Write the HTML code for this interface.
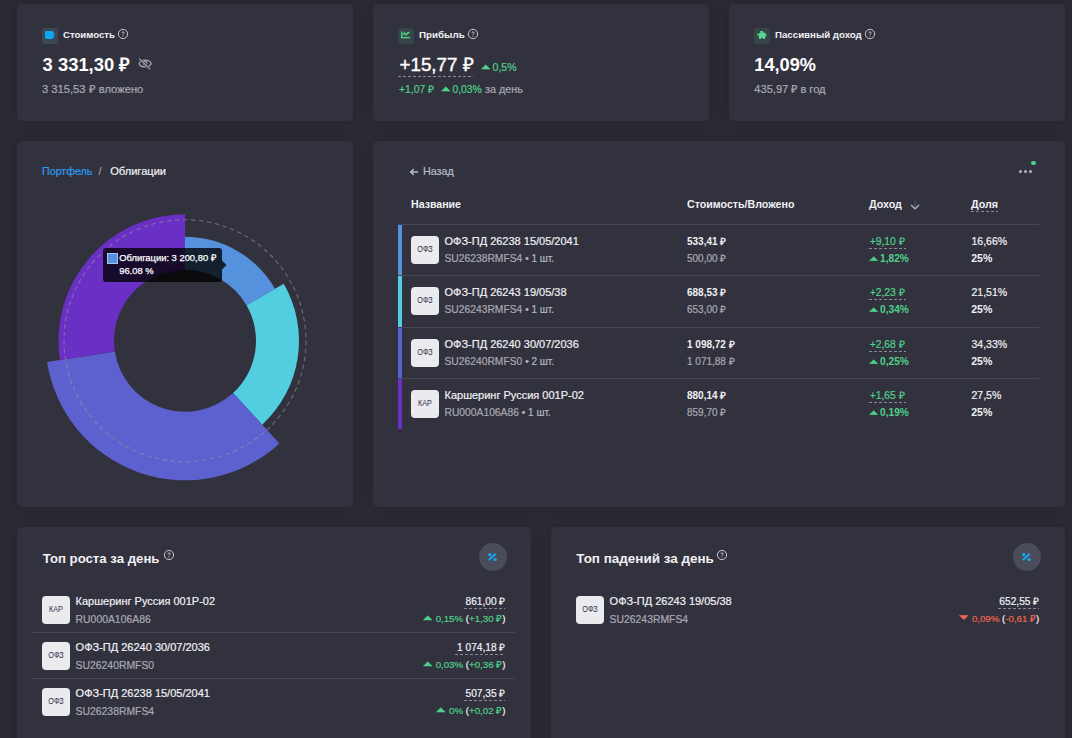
<!DOCTYPE html>
<html><head><meta charset="utf-8"><style>
html,body{margin:0;padding:0}
body{width:1072px;height:738px;overflow:hidden;position:relative;background:#2c2b34;font-family:"Liberation Sans",sans-serif}
.t{position:absolute;white-space:nowrap}
</style></head><body>
<div style="position:absolute;left:17px;top:4px;width:336px;height:117px;background:#32323e;border-radius:5px;box-shadow:0 0 14px rgba(0,0,0,0.2);"></div><div style="position:absolute;left:373px;top:4px;width:336px;height:117px;background:#32323e;border-radius:5px;box-shadow:0 0 14px rgba(0,0,0,0.2);"></div><div style="position:absolute;left:729px;top:4px;width:336px;height:117px;background:#32323e;border-radius:5px;box-shadow:0 0 14px rgba(0,0,0,0.2);"></div><div style="position:absolute;left:17px;top:141px;width:336px;height:366px;background:#32323e;border-radius:5px;box-shadow:0 0 14px rgba(0,0,0,0.2);"></div><div style="position:absolute;left:373px;top:141px;width:692px;height:366px;background:#32323e;border-radius:5px;box-shadow:0 0 14px rgba(0,0,0,0.2);"></div><div style="position:absolute;left:17px;top:527px;width:514px;height:230px;background:#32323e;border-radius:5px;box-shadow:0 0 14px rgba(0,0,0,0.2);"></div><div style="position:absolute;left:551px;top:527px;width:514px;height:230px;background:#32323e;border-radius:5px;box-shadow:0 0 14px rgba(0,0,0,0.2);"></div><div style="position:absolute;left:42px;top:28px;width:16px;height:16px;background:#3c4756;border-radius:3px;"></div><svg style="position:absolute;left:42px;top:28px" width="16" height="16" viewBox="0 0 16 16"><rect x="3" y="3" width="8.2" height="8" rx="1.4" fill="#0aa8f3"/><rect x="9" y="4.6" width="3.1" height="4.8" rx="0.6" fill="#0aa8f3"/><circle cx="10.6" cy="7" r="0.6" fill="#1f6c98"/></svg><div class="t" style="left:63px;top:30.00px;font-size:9.6px;line-height:9.6px;color:#f0f0f4;font-weight:700;">Стоимость</div><svg style="position:absolute;left:116px;top:27px" width="14" height="14" viewBox="0 0 14 14"><circle cx="7" cy="7" r="4.65" fill="none" stroke="#c9c9d0" stroke-width="1"/><path d="M5.9 5.9 Q5.9 4.9 7 4.9 Q8.1 4.9 8.1 5.9 Q8.1 6.5 7.4 6.8 Q7 7 7 7.7" fill="none" stroke="#c9c9d0" stroke-width="0.9"/><circle cx="7" cy="9.1" r="0.55" fill="#c9c9d0"/></svg><div class="t" style="left:42.6px;top:56.00px;font-size:18.4px;line-height:18.4px;color:#ffffff;font-weight:700;">3 331,30 ₽</div><svg style="position:absolute;left:136px;top:56px" width="18" height="16" viewBox="0 0 18 16"><path d="M3.1 7.5 C4.5 2.9 13.5 2.9 15.3 7.5 C13.5 12.1 4.5 12.1 3.1 7.5 Z" fill="none" stroke="#a4a6b0" stroke-width="1.2"/><circle cx="9" cy="7.3" r="1.9" fill="none" stroke="#a4a6b0" stroke-width="1.1"/><path d="M3.4 3 L13.9 12.9" stroke="#32323e" stroke-width="2.4"/><path d="M3.4 2.9 L13.8 12.8" stroke="#a4a6b0" stroke-width="1.2" stroke-linecap="round"/></svg><div class="t" style="left:42px;top:84.00px;font-size:11.2px;line-height:11.2px;color:#a9a9b3;font-weight:400;-webkit-text-stroke-width:0.2px;">3 315,53 ₽ вложено</div><div style="position:absolute;left:398px;top:28px;width:16px;height:16px;background:#364548;border-radius:3px;"></div><svg style="position:absolute;left:398px;top:28px" width="16" height="16" viewBox="0 0 16 16"><path d="M3.8 3.6 V9.6 H12.2" fill="none" stroke="#4fd88a" stroke-width="1.4"/><path d="M5 6.6 L6.6 5 L8.1 7.2 L10.2 4.4 L11.2 4.4" fill="none" stroke="#4fd88a" stroke-width="1.4" stroke-linejoin="round"/><path d="M9.6 4 H11.3 V6.5 Z" fill="#4fd88a"/></svg><div class="t" style="left:419px;top:30.00px;font-size:9.8px;line-height:9.8px;color:#f0f0f4;font-weight:700;">Прибыль</div><svg style="position:absolute;left:465.6px;top:27px" width="14" height="14" viewBox="0 0 14 14"><circle cx="7" cy="7" r="4.65" fill="none" stroke="#c9c9d0" stroke-width="1"/><path d="M5.9 5.9 Q5.9 4.9 7 4.9 Q8.1 4.9 8.1 5.9 Q8.1 6.5 7.4 6.8 Q7 7 7 7.7" fill="none" stroke="#c9c9d0" stroke-width="0.9"/><circle cx="7" cy="9.1" r="0.55" fill="#c9c9d0"/></svg><div class="t" style="left:399.5px;top:56.00px;font-size:18.8px;line-height:18.8px;color:#ffffff;font-weight:400;-webkit-text-stroke-width:0.4px;">+15,77 ₽</div><svg style="position:absolute;left:398.0px;top:76px" width="75.5" height="1"><line x1="0" y1="0.5" x2="75.5" y2="0.5" stroke="#8a8a92" stroke-width="1" stroke-dasharray="3 2"/></svg><svg style="position:absolute;left:480.5px;top:64px" width="9.6" height="5.6" viewBox="0 0 9.6 5.6"><path d="M0.5 5.1 L4.8 0.8 L9.1 5.1 Z" fill="#4fd08a" stroke="#4fd08a" stroke-width="0.6" stroke-linejoin="round"/></svg><div class="t" style="left:492.5px;top:62.00px;font-size:10.6px;line-height:10.6px;color:#4fd08a;font-weight:400;-webkit-text-stroke-width:0.2px;">0,5%</div><div class="t" style="left:399px;top:85.00px;font-size:10.4px;line-height:10.4px;color:#4fd08a;font-weight:400;-webkit-text-stroke-width:0.2px;">+1,07 ₽</div><svg style="position:absolute;left:441px;top:86px" width="9.6" height="5.6" viewBox="0 0 9.6 5.6"><path d="M0.5 5.1 L4.8 0.8 L9.1 5.1 Z" fill="#4fd08a" stroke="#4fd08a" stroke-width="0.6" stroke-linejoin="round"/></svg><div class="t" style="left:452.4px;top:85.00px;font-size:10.4px;line-height:10.4px;color:#4fd08a;font-weight:400;-webkit-text-stroke-width:0.2px;">0,03%</div><div class="t" style="left:485px;top:84.00px;font-size:10.8px;line-height:10.8px;color:#a9a9b3;font-weight:400;-webkit-text-stroke-width:0.2px;">за день</div><div style="position:absolute;left:754px;top:28px;width:16px;height:16px;background:#364548;border-radius:3px;"></div><svg style="position:absolute;left:754px;top:28px" width="16" height="16" viewBox="0 0 16 16"><ellipse cx="8.3" cy="7.1" rx="3.8" ry="2.9" fill="#56d890"/><rect x="6" y="3" width="3.2" height="1.8" rx="0.8" fill="#56d890"/><rect x="4.9" y="8.5" width="2" height="2.5" rx="0.5" fill="#56d890"/><rect x="9.1" y="8.5" width="1.9" height="2.5" rx="0.5" fill="#56d890"/><ellipse cx="3.8" cy="6.4" rx="0.9" ry="0.9" fill="#56d890"/><rect x="11" y="6" width="1.2" height="2.6" rx="0.5" fill="#56d890"/></svg><div class="t" style="left:775px;top:30.00px;font-size:9.7px;line-height:9.7px;color:#f0f0f4;font-weight:700;">Пассивный доход</div><svg style="position:absolute;left:863.2px;top:27px" width="14" height="14" viewBox="0 0 14 14"><circle cx="7" cy="7" r="4.65" fill="none" stroke="#c9c9d0" stroke-width="1"/><path d="M5.9 5.9 Q5.9 4.9 7 4.9 Q8.1 4.9 8.1 5.9 Q8.1 6.5 7.4 6.8 Q7 7 7 7.7" fill="none" stroke="#c9c9d0" stroke-width="0.9"/><circle cx="7" cy="9.1" r="0.55" fill="#c9c9d0"/></svg><div class="t" style="left:754.3px;top:56.00px;font-size:18.2px;line-height:18.2px;color:#ffffff;font-weight:700;">14,09%</div><div class="t" style="left:754.3px;top:84.00px;font-size:11.1px;line-height:11.1px;color:#a9a9b3;font-weight:400;-webkit-text-stroke-width:0.2px;">435,97 ₽ в год</div><div class="t" style="left:42px;top:166.00px;font-size:10.7px;line-height:10.7px;color:#2a9df4;font-weight:400;-webkit-text-stroke-width:0.2px;">Портфель</div><div class="t" style="left:98.5px;top:166.00px;font-size:10.7px;line-height:10.7px;color:#9a9aa4;font-weight:400;-webkit-text-stroke-width:0.2px;">/</div><div class="t" style="left:110.2px;top:166.00px;font-size:11.1px;line-height:11.1px;color:#f0f0f4;font-weight:400;-webkit-text-stroke-width:0.2px;">Облигации</div><svg style="position:absolute;left:0;top:0" width="360" height="520" viewBox="0 0 360 520"><path d="M185.00 236.75 A104 104 0 0 1 275.07 288.75 L246.49 305.25 A71 71 0 0 0 185.00 269.75 Z" fill="#5591dc"/><path d="M283.73 283.75 A114 114 0 0 1 262.16 424.67 L233.06 393.01 A71 71 0 0 0 246.49 305.25 Z" fill="#53cde0"/><path d="M279.42 443.44 A139.5 139.5 0 0 1 47.14 362.09 L114.84 351.61 A71 71 0 0 0 233.06 393.01 Z" fill="#5d61cf"/><path d="M59.99 360.10 A126.5 126.5 0 0 1 185.00 214.25 L185.00 269.75 A71 71 0 0 0 114.84 351.61 Z" fill="#6a2fc4"/><circle cx="185" cy="340.75" r="121" fill="none" stroke="rgba(150,150,160,0.6)" stroke-width="1.1" stroke-dasharray="4.5 3.5"/></svg><div style="position:absolute;left:103px;top:248px;width:119px;height:34px;background:rgba(0,0,0,0.78);border-radius:3px"></div><svg style="position:absolute;left:222px;top:260px" width="5" height="10" viewBox="0 0 5 10"><path d="M0 0.5 L4.5 5 L0 9.5 Z" fill="rgba(0,0,0,0.78)"/></svg><div style="position:absolute;left:107px;top:253px;width:11px;height:11px;background:#5591dc;border-radius:0px;box-sizing:border-box;border:1px solid #a8c4ee;"></div><div class="t" style="left:119.2px;top:253.00px;font-size:9.4px;line-height:9.4px;color:#ffffff;font-weight:400;-webkit-text-stroke-width:0.25px;">Облигации: 3 200,80 ₽</div><div class="t" style="left:119.2px;top:266.00px;font-size:9.4px;line-height:9.4px;color:#ffffff;font-weight:400;-webkit-text-stroke-width:0.25px;">96.08 %</div><svg style="position:absolute;left:409px;top:167px" width="10" height="10" viewBox="0 0 10 10"><path d="M9 5 H2 M4.8 2 L1.6 5 L4.8 8" fill="none" stroke="#b6bccb" stroke-width="1.4"/></svg><div class="t" style="left:422.9px;top:166.00px;font-size:10.8px;line-height:10.8px;color:#b6bccb;font-weight:400;-webkit-text-stroke-width:0.2px;">Назад</div><div class="t" style="left:411px;top:199.00px;font-size:10.6px;line-height:10.6px;color:#f0f0f4;font-weight:700;">Название</div><div class="t" style="left:687px;top:199.00px;font-size:10.65px;line-height:10.65px;color:#f0f0f4;font-weight:700;">Стоимость/Вложено</div><div class="t" style="left:869px;top:199.00px;font-size:10.7px;line-height:10.7px;color:#f0f0f4;font-weight:700;">Доход</div><svg style="position:absolute;left:910px;top:199px" width="10" height="12" viewBox="0 0 10 12"><path d="M5 1 V7" fill="none" stroke="#4e4e5a" stroke-width="1.2"/><path d="M1.3 6.3 L5 9.8 L8.7 6.3" fill="none" stroke="#b4b8c4" stroke-width="1.25" stroke-linecap="round" stroke-linejoin="round"/></svg><div class="t" style="left:971px;top:199.00px;font-size:10.7px;line-height:10.7px;color:#f0f0f4;font-weight:700;">Доля</div><svg style="position:absolute;left:971.0px;top:211px" width="27.0" height="1"><line x1="0" y1="0.5" x2="27.0" y2="0.5" stroke="#8a8a92" stroke-width="1" stroke-dasharray="3 2"/></svg><div style="position:absolute;left:1018.9px;top:169.8px;width:3.2px;height:3.2px;background:#b4b4bc;border-radius:1.6px;"></div><div style="position:absolute;left:1023.6999999999999px;top:169.8px;width:3.2px;height:3.2px;background:#b4b4bc;border-radius:1.6px;"></div><div style="position:absolute;left:1028.6000000000001px;top:169.8px;width:3.2px;height:3.2px;background:#b4b4bc;border-radius:1.6px;"></div><div style="position:absolute;left:1031px;top:160.6px;width:4.6px;height:4.6px;background:#4fd08a;border-radius:2.3px;"></div><div style="position:absolute;left:398px;top:224px;width:641px;height:1px;background:#474754;border-radius:0px;"></div><div style="position:absolute;left:398px;top:225px;width:4px;height:50px;background:#5591dc;border-radius:0px;"></div><div style="position:absolute;left:398px;top:275px;width:641px;height:1px;background:#474754;border-radius:0px;"></div><div style="position:absolute;left:411px;top:236px;width:28px;height:28px;background:#e9ebef;border-radius:4px;"></div><div class="t" style="left:425px;top:245.00px;font-size:8.6px;line-height:8.6px;color:#3a3650;font-weight:400;-webkit-text-stroke-width:0.05px;transform:translateX(-50%) scaleX(0.84);">ОФЗ</div><div class="t" style="left:444.5px;top:236.00px;font-size:11px;line-height:11px;color:#f0f0f4;font-weight:400;-webkit-text-stroke-width:0.2px;">ОФЗ-ПД 26238 15/05/2041</div><div class="t" style="left:444.5px;top:254.00px;font-size:10.3px;line-height:10.3px;color:#a9a9b3;font-weight:400;-webkit-text-stroke-width:0.2px;">SU26238RMFS4 <span style="font-size:10px;color:#b8b8c0">• 1 шт.</span></div><div class="t" style="left:687px;top:237.00px;font-size:10px;line-height:10px;color:#f0f0f4;font-weight:700;">533,41 ₽</div><div class="t" style="left:687px;top:254.00px;font-size:10px;line-height:10px;color:#a9a9b3;font-weight:400;-webkit-text-stroke-width:0.2px;">500,00 ₽</div><div class="t" style="left:869.7px;top:237.00px;font-size:10.3px;line-height:10.3px;color:#4fd08a;font-weight:400;-webkit-text-stroke-width:0.2px;">+9,10 ₽</div><svg style="position:absolute;left:869.0px;top:248px" width="37.0" height="1"><line x1="0" y1="0.5" x2="37.0" y2="0.5" stroke="#8a8a92" stroke-width="1" stroke-dasharray="3 2"/></svg><svg style="position:absolute;left:869px;top:255.5px" width="9.4" height="5.3" viewBox="0 0 9.4 5.3"><path d="M0.5 4.8 L4.7 0.8 L8.9 4.8 Z" fill="#4fd08a" stroke="#4fd08a" stroke-width="0.6" stroke-linejoin="round"/></svg><div class="t" style="left:880px;top:254.00px;font-size:10.2px;line-height:10.2px;color:#4fd08a;font-weight:700;">1,82%</div><div class="t" style="left:971.5px;top:236.00px;font-size:10.5px;line-height:10.5px;color:#f0f0f4;font-weight:400;-webkit-text-stroke-width:0.2px;">16,66%</div><div class="t" style="left:971.2px;top:253.00px;font-size:10.6px;line-height:10.6px;color:#f0f0f4;font-weight:700;">25%</div><div style="position:absolute;left:398px;top:276px;width:4px;height:51px;background:#53cde0;border-radius:0px;"></div><div style="position:absolute;left:398px;top:327px;width:641px;height:1px;background:#474754;border-radius:0px;"></div><div style="position:absolute;left:411px;top:287px;width:28px;height:28px;background:#e9ebef;border-radius:4px;"></div><div class="t" style="left:425px;top:296.00px;font-size:8.6px;line-height:8.6px;color:#3a3650;font-weight:400;-webkit-text-stroke-width:0.05px;transform:translateX(-50%) scaleX(0.84);">ОФЗ</div><div class="t" style="left:444.5px;top:287.00px;font-size:11px;line-height:11px;color:#f0f0f4;font-weight:400;-webkit-text-stroke-width:0.2px;">ОФЗ-ПД 26243 19/05/38</div><div class="t" style="left:444.5px;top:305.00px;font-size:10.3px;line-height:10.3px;color:#a9a9b3;font-weight:400;-webkit-text-stroke-width:0.2px;">SU26243RMFS4 <span style="font-size:10px;color:#b8b8c0">• 1 шт.</span></div><div class="t" style="left:687px;top:288.00px;font-size:10px;line-height:10px;color:#f0f0f4;font-weight:700;">688,53 ₽</div><div class="t" style="left:687px;top:305.00px;font-size:10px;line-height:10px;color:#a9a9b3;font-weight:400;-webkit-text-stroke-width:0.2px;">653,00 ₽</div><div class="t" style="left:869.7px;top:288.00px;font-size:10.3px;line-height:10.3px;color:#4fd08a;font-weight:400;-webkit-text-stroke-width:0.2px;">+2,23 ₽</div><svg style="position:absolute;left:869.0px;top:299px" width="37.0" height="1"><line x1="0" y1="0.5" x2="37.0" y2="0.5" stroke="#8a8a92" stroke-width="1" stroke-dasharray="3 2"/></svg><svg style="position:absolute;left:869px;top:306.5px" width="9.4" height="5.3" viewBox="0 0 9.4 5.3"><path d="M0.5 4.8 L4.7 0.8 L8.9 4.8 Z" fill="#4fd08a" stroke="#4fd08a" stroke-width="0.6" stroke-linejoin="round"/></svg><div class="t" style="left:880px;top:305.00px;font-size:10.2px;line-height:10.2px;color:#4fd08a;font-weight:700;">0,34%</div><div class="t" style="left:971.5px;top:287.00px;font-size:10.5px;line-height:10.5px;color:#f0f0f4;font-weight:400;-webkit-text-stroke-width:0.2px;">21,51%</div><div class="t" style="left:971.2px;top:304.00px;font-size:10.6px;line-height:10.6px;color:#f0f0f4;font-weight:700;">25%</div><div style="position:absolute;left:398px;top:328px;width:4px;height:50px;background:#5d61cf;border-radius:0px;"></div><div style="position:absolute;left:398px;top:378px;width:641px;height:1px;background:#474754;border-radius:0px;"></div><div style="position:absolute;left:411px;top:339px;width:28px;height:28px;background:#e9ebef;border-radius:4px;"></div><div class="t" style="left:425px;top:348.00px;font-size:8.6px;line-height:8.6px;color:#3a3650;font-weight:400;-webkit-text-stroke-width:0.05px;transform:translateX(-50%) scaleX(0.84);">ОФЗ</div><div class="t" style="left:444.5px;top:339.00px;font-size:11px;line-height:11px;color:#f0f0f4;font-weight:400;-webkit-text-stroke-width:0.2px;">ОФЗ-ПД 26240 30/07/2036</div><div class="t" style="left:444.5px;top:357.00px;font-size:10.3px;line-height:10.3px;color:#a9a9b3;font-weight:400;-webkit-text-stroke-width:0.2px;">SU26240RMFS0 <span style="font-size:10px;color:#b8b8c0">• 2 шт.</span></div><div class="t" style="left:687px;top:340.00px;font-size:10px;line-height:10px;color:#f0f0f4;font-weight:700;">1 098,72 ₽</div><div class="t" style="left:687px;top:357.00px;font-size:10px;line-height:10px;color:#a9a9b3;font-weight:400;-webkit-text-stroke-width:0.2px;">1 071,88 ₽</div><div class="t" style="left:869.7px;top:340.00px;font-size:10.3px;line-height:10.3px;color:#4fd08a;font-weight:400;-webkit-text-stroke-width:0.2px;">+2,68 ₽</div><svg style="position:absolute;left:869.0px;top:351px" width="37.0" height="1"><line x1="0" y1="0.5" x2="37.0" y2="0.5" stroke="#8a8a92" stroke-width="1" stroke-dasharray="3 2"/></svg><svg style="position:absolute;left:869px;top:358.5px" width="9.4" height="5.3" viewBox="0 0 9.4 5.3"><path d="M0.5 4.8 L4.7 0.8 L8.9 4.8 Z" fill="#4fd08a" stroke="#4fd08a" stroke-width="0.6" stroke-linejoin="round"/></svg><div class="t" style="left:880px;top:357.00px;font-size:10.2px;line-height:10.2px;color:#4fd08a;font-weight:700;">0,25%</div><div class="t" style="left:971.5px;top:339.00px;font-size:10.5px;line-height:10.5px;color:#f0f0f4;font-weight:400;-webkit-text-stroke-width:0.2px;">34,33%</div><div class="t" style="left:971.2px;top:356.00px;font-size:10.6px;line-height:10.6px;color:#f0f0f4;font-weight:700;">25%</div><div style="position:absolute;left:398px;top:379px;width:4px;height:50px;background:#6a2fc4;border-radius:0px;"></div><div style="position:absolute;left:411px;top:390px;width:28px;height:28px;background:#e9ebef;border-radius:4px;"></div><div class="t" style="left:425px;top:399.00px;font-size:8.6px;line-height:8.6px;color:#3a3650;font-weight:400;-webkit-text-stroke-width:0.05px;transform:translateX(-50%) scaleX(0.84);">КАР</div><div class="t" style="left:444.5px;top:390.00px;font-size:11px;line-height:11px;color:#f0f0f4;font-weight:400;-webkit-text-stroke-width:0.2px;">Каршеринг Руссия 001P-02</div><div class="t" style="left:444.5px;top:408.00px;font-size:10.3px;line-height:10.3px;color:#a9a9b3;font-weight:400;-webkit-text-stroke-width:0.2px;">RU000A106A86 <span style="font-size:10px;color:#b8b8c0">• 1 шт.</span></div><div class="t" style="left:687px;top:391.00px;font-size:10px;line-height:10px;color:#f0f0f4;font-weight:700;">880,14 ₽</div><div class="t" style="left:687px;top:408.00px;font-size:10px;line-height:10px;color:#a9a9b3;font-weight:400;-webkit-text-stroke-width:0.2px;">859,70 ₽</div><div class="t" style="left:869.7px;top:391.00px;font-size:10.3px;line-height:10.3px;color:#4fd08a;font-weight:400;-webkit-text-stroke-width:0.2px;">+1,65 ₽</div><svg style="position:absolute;left:869.0px;top:402px" width="37.0" height="1"><line x1="0" y1="0.5" x2="37.0" y2="0.5" stroke="#8a8a92" stroke-width="1" stroke-dasharray="3 2"/></svg><svg style="position:absolute;left:869px;top:409.5px" width="9.4" height="5.3" viewBox="0 0 9.4 5.3"><path d="M0.5 4.8 L4.7 0.8 L8.9 4.8 Z" fill="#4fd08a" stroke="#4fd08a" stroke-width="0.6" stroke-linejoin="round"/></svg><div class="t" style="left:880px;top:408.00px;font-size:10.2px;line-height:10.2px;color:#4fd08a;font-weight:700;">0,19%</div><div class="t" style="left:971.5px;top:390.00px;font-size:10.5px;line-height:10.5px;color:#f0f0f4;font-weight:400;-webkit-text-stroke-width:0.2px;">27,5%</div><div class="t" style="left:971.2px;top:407.00px;font-size:10.6px;line-height:10.6px;color:#f0f0f4;font-weight:700;">25%</div><div class="t" style="left:42.7px;top:552.00px;font-size:13.2px;line-height:13.2px;color:#f0f0f4;font-weight:700;">Топ роста за день</div><svg style="position:absolute;left:161.5px;top:548px" width="14" height="14" viewBox="0 0 14 14"><circle cx="7" cy="7" r="4.6" fill="none" stroke="#c9c9d0" stroke-width="1"/><path d="M5.9 5.9 Q5.9 4.9 7 4.9 Q8.1 4.9 8.1 5.9 Q8.1 6.5 7.4 6.8 Q7 7 7 7.7" fill="none" stroke="#c9c9d0" stroke-width="0.9"/><circle cx="7" cy="9.1" r="0.55" fill="#c9c9d0"/></svg><div style="position:absolute;left:479px;top:543px;width:28px;height:28px;border-radius:14px;background:#4a4c5a"></div><svg style="position:absolute;left:479px;top:543px" width="28" height="28" viewBox="0 0 28 28"><path d="M10.4 16.5 L16.3 11.3" stroke="#14aaf8" stroke-width="1.9" stroke-linecap="round"/><circle cx="10.8" cy="11.7" r="1.6" fill="#14aaf8"/><circle cx="16.1" cy="16.5" r="1.6" fill="#14aaf8"/></svg><div class="t" style="left:576.3px;top:552.00px;font-size:13.45px;line-height:13.45px;color:#f0f0f4;font-weight:700;">Топ падений за день</div><svg style="position:absolute;left:715.3px;top:547.8px" width="14" height="14" viewBox="0 0 14 14"><circle cx="7" cy="7" r="4.6" fill="none" stroke="#c9c9d0" stroke-width="1"/><path d="M5.9 5.9 Q5.9 4.9 7 4.9 Q8.1 4.9 8.1 5.9 Q8.1 6.5 7.4 6.8 Q7 7 7 7.7" fill="none" stroke="#c9c9d0" stroke-width="0.9"/><circle cx="7" cy="9.1" r="0.55" fill="#c9c9d0"/></svg><div style="position:absolute;left:1013px;top:543px;width:28px;height:28px;border-radius:14px;background:#4a4c5a"></div><svg style="position:absolute;left:1013px;top:543px" width="28" height="28" viewBox="0 0 28 28"><path d="M10.4 16.5 L16.3 11.3" stroke="#14aaf8" stroke-width="1.9" stroke-linecap="round"/><circle cx="10.8" cy="11.7" r="1.6" fill="#14aaf8"/><circle cx="16.1" cy="16.5" r="1.6" fill="#14aaf8"/></svg><div style="position:absolute;left:42px;top:596px;width:28px;height:28px;background:#e9ebef;border-radius:4px;"></div><div class="t" style="left:56px;top:605.00px;font-size:8.6px;line-height:8.6px;color:#3a3650;font-weight:400;-webkit-text-stroke-width:0.05px;transform:translateX(-50%) scaleX(0.84);">КАР</div><div class="t" style="left:75.6px;top:596.00px;font-size:11px;line-height:11px;color:#f0f0f4;font-weight:400;-webkit-text-stroke-width:0.2px;">Каршеринг Руссия 001P-02</div><div class="t" style="left:75.6px;top:615.00px;font-size:10.4px;line-height:10.4px;color:#a9a9b3;font-weight:400;-webkit-text-stroke-width:0.2px;">RU000A106A86</div><div class="t" style="right:566.5px;top:597.00px;font-size:10.2px;line-height:10.2px;color:#f0f0f4;font-weight:400;-webkit-text-stroke-width:0.2px;">861,00 ₽</div><div class="t" style="right:566.5px;top:614.00px;font-size:9.7px;line-height:9.7px;color:#4fd08a;font-weight:400;-webkit-text-stroke-width:0.2px;">0,15% <span style="color:#f0f0f4">(</span>+1,30 ₽<span style="color:#f0f0f4">)</span></div><svg style="position:absolute;left:463.8px;top:608px" width="41.7" height="1"><line x1="0" y1="0.5" x2="41.7" y2="0.5" stroke="#8a8a92" stroke-width="1" stroke-dasharray="3 2"/></svg><svg style="position:absolute;left:422.5px;top:615px" width="9.6" height="5.5" viewBox="0 0 9.6 5.5"><path d="M0.5 5.0 L4.8 0.8 L9.1 5.0 Z" fill="#4fd08a" stroke="#4fd08a" stroke-width="0.6" stroke-linejoin="round"/></svg><div style="position:absolute;left:32px;top:632px;width:483px;height:1px;background:#474754;border-radius:0px;"></div><div style="position:absolute;left:42px;top:642px;width:28px;height:28px;background:#e9ebef;border-radius:4px;"></div><div class="t" style="left:56px;top:651.00px;font-size:8.6px;line-height:8.6px;color:#3a3650;font-weight:400;-webkit-text-stroke-width:0.05px;transform:translateX(-50%) scaleX(0.84);">ОФЗ</div><div class="t" style="left:75.6px;top:642.00px;font-size:11px;line-height:11px;color:#f0f0f4;font-weight:400;-webkit-text-stroke-width:0.2px;">ОФЗ-ПД 26240 30/07/2036</div><div class="t" style="left:75.6px;top:661.00px;font-size:10.4px;line-height:10.4px;color:#a9a9b3;font-weight:400;-webkit-text-stroke-width:0.2px;">SU26240RMFS0</div><div class="t" style="right:566.5px;top:643.00px;font-size:10.2px;line-height:10.2px;color:#f0f0f4;font-weight:400;-webkit-text-stroke-width:0.2px;">1 074,18 ₽</div><div class="t" style="right:566.5px;top:660.00px;font-size:9.7px;line-height:9.7px;color:#4fd08a;font-weight:400;-webkit-text-stroke-width:0.2px;">0,03% <span style="color:#f0f0f4">(</span>+0,36 ₽<span style="color:#f0f0f4">)</span></div><svg style="position:absolute;left:455.3px;top:654px" width="50.2" height="1"><line x1="0" y1="0.5" x2="50.2" y2="0.5" stroke="#8a8a92" stroke-width="1" stroke-dasharray="3 2"/></svg><svg style="position:absolute;left:422.5px;top:661px" width="9.6" height="5.5" viewBox="0 0 9.6 5.5"><path d="M0.5 5.0 L4.8 0.8 L9.1 5.0 Z" fill="#4fd08a" stroke="#4fd08a" stroke-width="0.6" stroke-linejoin="round"/></svg><div style="position:absolute;left:32px;top:678px;width:483px;height:1px;background:#474754;border-radius:0px;"></div><div style="position:absolute;left:42px;top:688px;width:28px;height:28px;background:#e9ebef;border-radius:4px;"></div><div class="t" style="left:56px;top:697.00px;font-size:8.6px;line-height:8.6px;color:#3a3650;font-weight:400;-webkit-text-stroke-width:0.05px;transform:translateX(-50%) scaleX(0.84);">ОФЗ</div><div class="t" style="left:75.6px;top:688.00px;font-size:11px;line-height:11px;color:#f0f0f4;font-weight:400;-webkit-text-stroke-width:0.2px;">ОФЗ-ПД 26238 15/05/2041</div><div class="t" style="left:75.6px;top:707.00px;font-size:10.4px;line-height:10.4px;color:#a9a9b3;font-weight:400;-webkit-text-stroke-width:0.2px;">SU26238RMFS4</div><div class="t" style="right:566.5px;top:689.00px;font-size:10.2px;line-height:10.2px;color:#f0f0f4;font-weight:400;-webkit-text-stroke-width:0.2px;">507,35 ₽</div><div class="t" style="right:566.5px;top:706.00px;font-size:9.7px;line-height:9.7px;color:#4fd08a;font-weight:400;-webkit-text-stroke-width:0.2px;">0% <span style="color:#f0f0f4">(</span>+0,02 ₽<span style="color:#f0f0f4">)</span></div><svg style="position:absolute;left:463.8px;top:700px" width="41.7" height="1"><line x1="0" y1="0.5" x2="41.7" y2="0.5" stroke="#8a8a92" stroke-width="1" stroke-dasharray="3 2"/></svg><svg style="position:absolute;left:436.0px;top:707px" width="9.6" height="5.5" viewBox="0 0 9.6 5.5"><path d="M0.5 5.0 L4.8 0.8 L9.1 5.0 Z" fill="#4fd08a" stroke="#4fd08a" stroke-width="0.6" stroke-linejoin="round"/></svg><div style="position:absolute;left:576px;top:596px;width:28px;height:28px;background:#e9ebef;border-radius:4px;"></div><div class="t" style="left:590px;top:605.00px;font-size:8.6px;line-height:8.6px;color:#3a3650;font-weight:400;-webkit-text-stroke-width:0.05px;transform:translateX(-50%) scaleX(0.84);">ОФЗ</div><div class="t" style="left:609.6px;top:596.00px;font-size:11px;line-height:11px;color:#f0f0f4;font-weight:400;-webkit-text-stroke-width:0.2px;">ОФЗ-ПД 26243 19/05/38</div><div class="t" style="left:609.6px;top:615.00px;font-size:10.4px;line-height:10.4px;color:#a9a9b3;font-weight:400;-webkit-text-stroke-width:0.2px;">SU26243RMFS4</div><div class="t" style="right:32.700000000000045px;top:597.00px;font-size:10.2px;line-height:10.2px;color:#f0f0f4;font-weight:400;-webkit-text-stroke-width:0.2px;">652,55 ₽</div><div class="t" style="right:32.700000000000045px;top:614.00px;font-size:9.7px;line-height:9.7px;color:#ee6450;font-weight:400;-webkit-text-stroke-width:0.2px;">0,09% <span style="color:#f0f0f4">(</span>-0,61 ₽<span style="color:#f0f0f4">)</span></div><svg style="position:absolute;left:997.6px;top:608px" width="41.7" height="1"><line x1="0" y1="0.5" x2="41.7" y2="0.5" stroke="#8a8a92" stroke-width="1" stroke-dasharray="3 2"/></svg><svg style="position:absolute;left:959.0px;top:614.5px" width="9.6" height="5.5" viewBox="0 0 9.6 5.5"><path d="M0.5 0.5 L4.8 4.7 L9.1 0.5 Z" fill="#ee6450" stroke="#ee6450" stroke-width="0.6" stroke-linejoin="round"/></svg>
</body></html>
